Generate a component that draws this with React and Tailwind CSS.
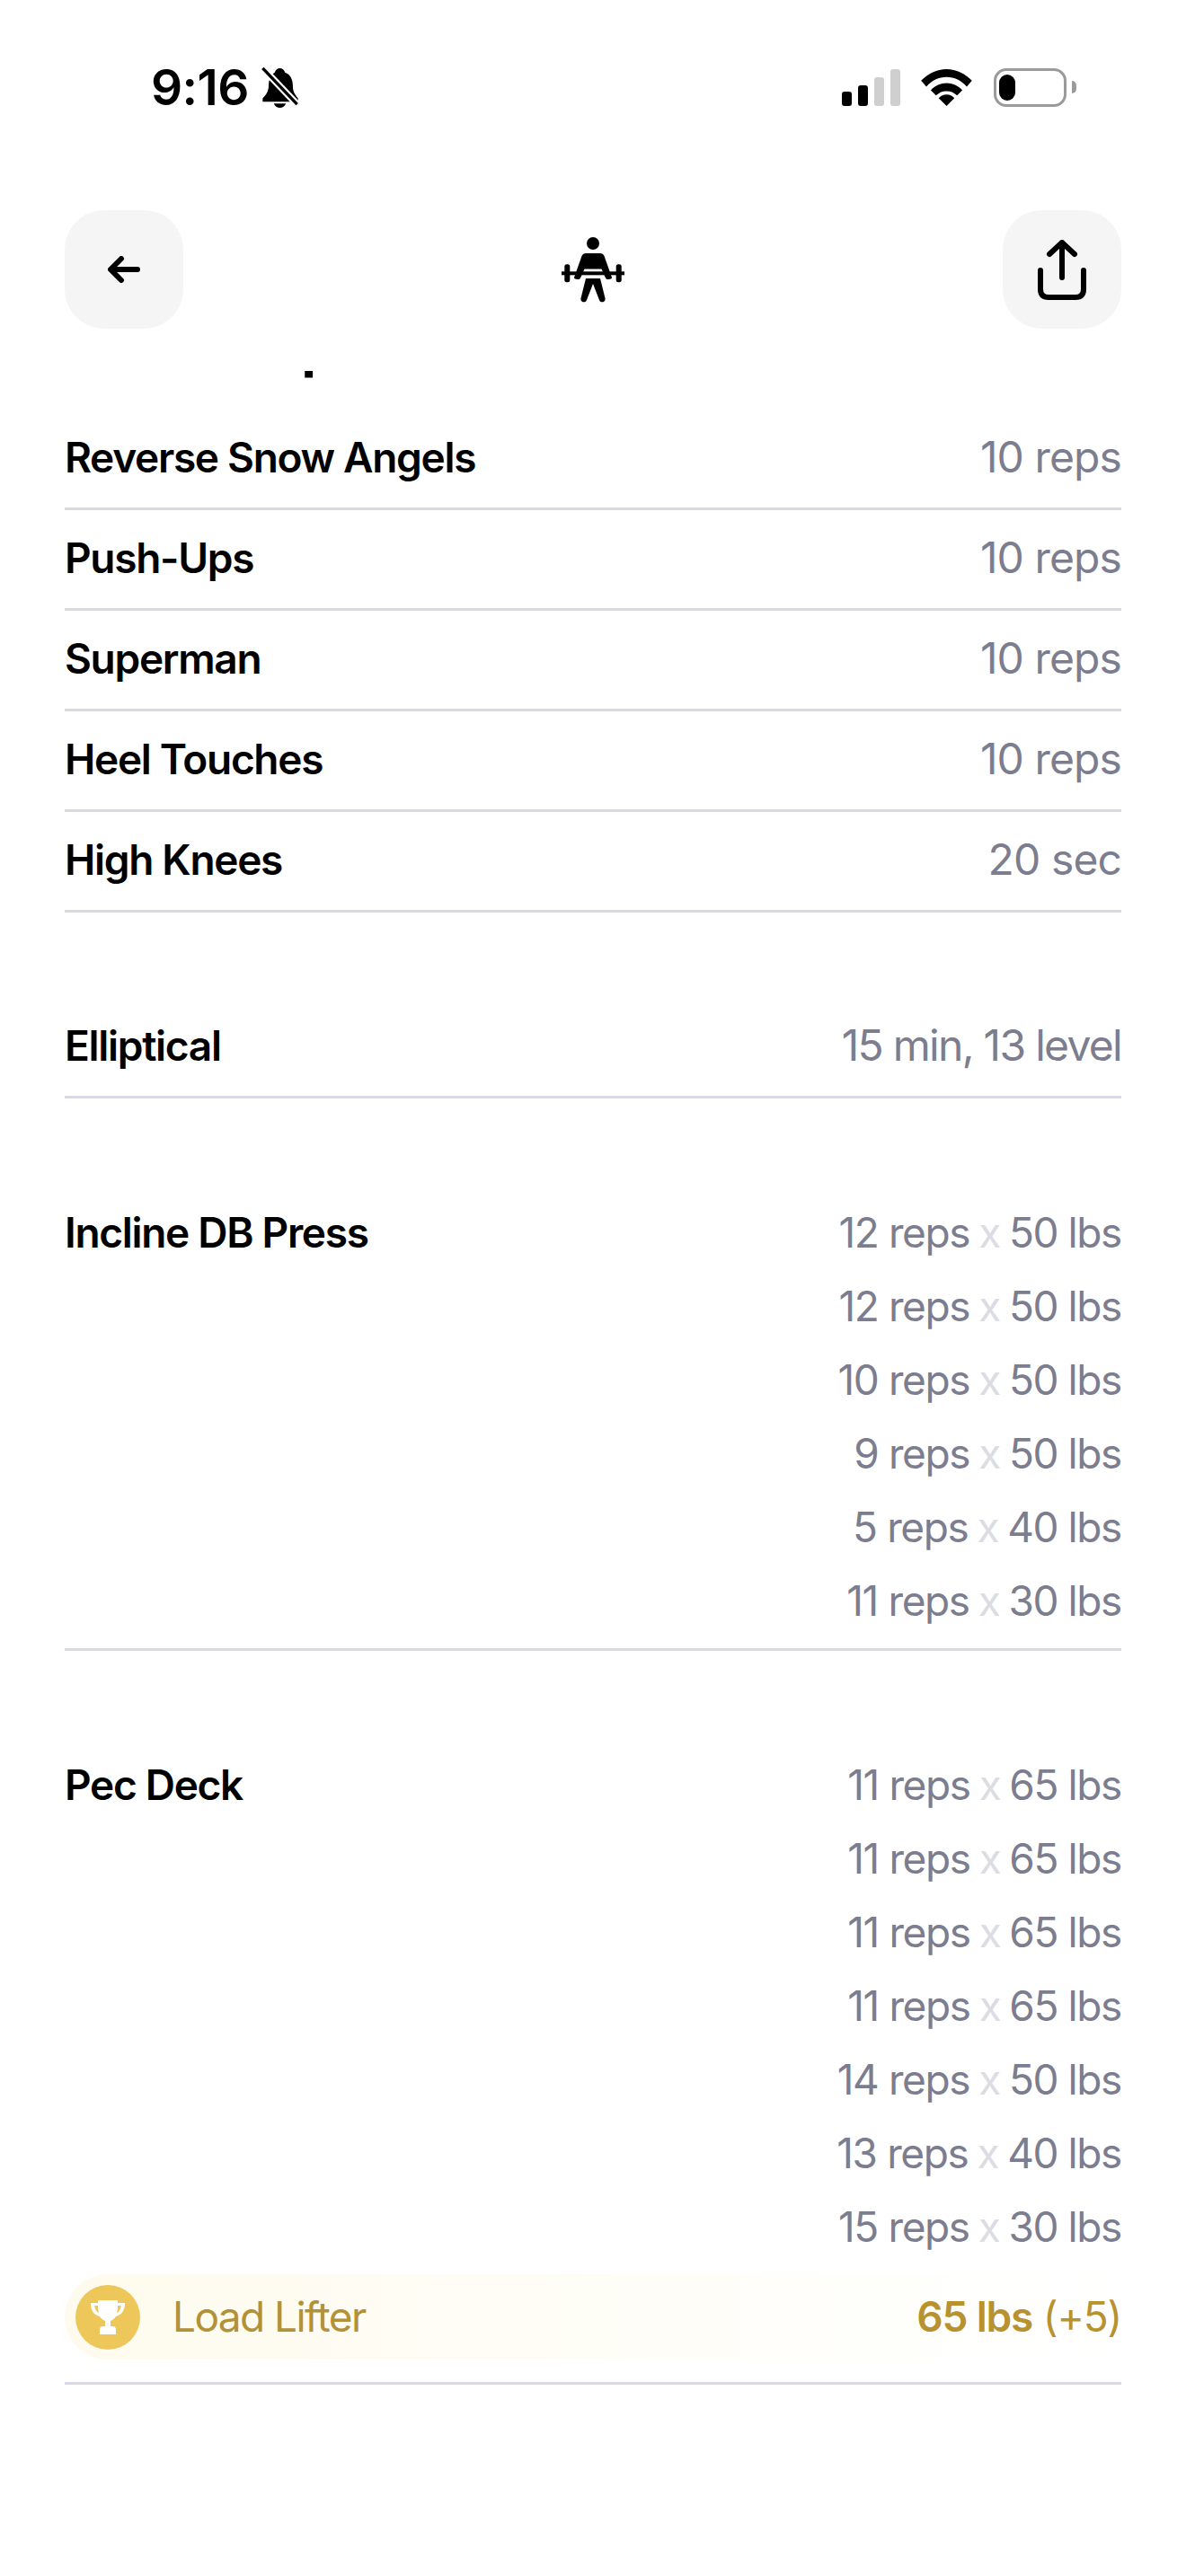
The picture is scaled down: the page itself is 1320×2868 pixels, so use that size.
const sans = "font-['Inter','Liberation_Sans',sans-serif]";

function SetLine({ reps, lbs }) {
  return (
    <div className="flex h-[82px] items-center justify-end text-[46px] tracking-[-1.4px] text-[#7c7d8e]">
      {reps} reps<span className="mx-[10px] text-[#dcdce4]">x</span>{lbs} lbs
    </div>
  );
}

function SimpleRow({ name, value, tight }) {
  return (
    <div className="flex h-[112px] items-center justify-between border-b-[3px] border-[#d9d9e6] pb-[3px]">
      <span className="text-[46px] font-semibold tracking-[-1.3px] text-black">{name}</span>
      <span className={`text-[48px] text-[#7c7d8e] ${tight ? "tracking-[-1.7px]" : "tracking-[-0.9px]"}`}>{value}</span>
    </div>
  );
}

function SetsBlock({ name, sets, className, children }) {
  return (
    <div className={`${className} border-b-[3px] border-[#d9d9e6] pb-[12px]`}>
      <div className="flex justify-between">
        <span className="flex h-[82px] items-center text-[46px] font-semibold tracking-[-1.3px] text-black">{name}</span>
        <div>
          {sets.map((s, i) => (
            <SetLine key={i} reps={s[0]} lbs={s[1]} />
          ))}
        </div>
      </div>
      {children}
    </div>
  );
}

export default function App() {
  return (
    <div className={`${sans} h-[2868px] w-[1320px] overflow-hidden bg-white`}>
      {/* status bar */}
      <div className="flex h-[234px] items-start justify-between pl-[168px] pr-[122px] pt-[72px]">
        <div className="flex h-[50px] items-center gap-[13px]">
          <span className="text-[55px] font-semibold leading-[50px] tracking-[-0.6px] text-black">9:16</span>
          <svg width="43" height="46" viewBox="0 0 44 48" fill="black">
            <path d="M22 2c3 0 5 2 6 5 6 2 9 8 9 15 0 7 2 10 6 15v4H2v-4c4-4 7-8 7-15 0-7 3-13 7-15 1-3 3-5 6-5z" />
            <path d="M15 43h14c-1 3-4 5-7 5s-6-2-7-5z" />
            <path d="M3 3l39 41" stroke="white" strokeWidth="8" />
            <path d="M2 2l40 42" stroke="black" strokeWidth="3.5" />
          </svg>
        </div>
        <div className="flex h-[50px] items-center">
          <div className="flex items-end gap-[7px]">
            <div className="h-[16px] w-[11px] rounded-[3px] bg-black" />
            <div className="h-[23px] w-[11px] rounded-[3px] bg-black" />
            <div className="h-[32px] w-[11px] rounded-[3px] bg-[#cfcfcf]" />
            <div className="h-[41px] w-[11px] rounded-[3px] bg-[#cfcfcf]" />
          </div>
          <svg className="ml-[23px]" width="57" height="41" viewBox="0 0 58 42" fill="black">
            <path d="M0 13C8 5 18 0 29 0s21 5 29 13l-6 7C46 13 38 9 29 9S12 13 6 20z" />
            <path d="M11 24c5-5 11-8 18-8s13 3 18 8l-6 6c-3-3-7-5-12-5s-9 2-12 5z" />
            <path d="M20 33c2-2 5-4 9-4s7 2 9 4l-9 9z" />
          </svg>
          <div className="ml-[24px] flex items-center gap-[6px]">
            <div className="flex h-[43px] w-[81px] items-center rounded-[14px] border-[3px] border-[#9a9a9a] pl-[3px]">
              <div className="h-[29px] w-[18px] rounded-[9px] bg-black" />
            </div>
            <div className="h-[14px] w-[5px] rounded-r-[5px] bg-[#9a9a9a]" />
          </div>
        </div>
      </div>

      {/* header */}
      <div className="flex h-[132px] items-center justify-between px-[72px]">
        <button className="flex h-[132px] w-[132px] items-center justify-center rounded-[44px] bg-[#f5f5f6]">
          <svg width="36" height="30" viewBox="0 0 36 30" fill="none" stroke="black" strokeWidth="6" strokeLinecap="round" strokeLinejoin="round">
            <path d="M33 15H4M15 3 3 15l12 12" />
          </svg>
        </button>
        <svg width="70" height="74" viewBox="0 0 70 74" fill="black">
          <circle cx="35" cy="8" r="7" />
          <path d="M27 19H43C45 19 46.5 20 47.5 22L56 46C56.5 48 50 49 49 46.5L44.5 36.5H25.5L21 46.5C20 49 13.5 48 14 46L22.5 22C23.5 20 25 19 27 19Z" />
          <rect x="0" y="39.3" width="70" height="4" />
          <rect x="3.3" y="31.3" width="6" height="20" rx="2.5" />
          <rect x="60.7" y="31.3" width="6" height="20" rx="2.5" />
          <path d="M27 47H43L48.5 69C49.5 73.5 43 75 42 71L35 53L28 71C27 75 20.5 73.5 21.5 69Z" />
        </svg>
        <button className="flex h-[132px] w-[132px] items-center justify-center rounded-[44px] bg-[#f5f5f6]">
          <svg width="54" height="67" viewBox="0 0 54 67" fill="none" stroke="black" strokeWidth="6" strokeLinecap="round" strokeLinejoin="round">
            <path d="M27 42V3M13 16 27 3l14 13" />
            <path d="M3 34v21c0 6 3 9 9 9h30c6 0 9-3 9-9V34" />
          </svg>
        </button>
      </div>

      {/* list, scrolled so that only the bottom of the section title shows */}
      <div className="mt-[47px] h-[2455px] overflow-hidden px-[72px]">
        <div className="-mt-[74px] mb-[33px] h-[84px] text-[70px] font-semibold leading-[84px] tracking-[-1px] text-black">Warm Up</div>
        <SimpleRow name="Reverse Snow Angels" value="10 reps" />
        <SimpleRow name="Push-Ups" value="10 reps" />
        <SimpleRow name="Superman" value="10 reps" />
        <SimpleRow name="Heel Touches" value="10 reps" />
        <SimpleRow name="High Knees" value="20 sec" />

        <div className="mt-[95px]">
          <SimpleRow name="Elliptical" value="15 min, 13 level" tight />
        </div>

        <SetsBlock
          className="mt-[108px]"
          name="Incline DB Press"
          sets={[[12, 50], [12, 50], [10, 50], [9, 50], [5, 40], [11, 30]]}
        />

        <SetsBlock
          className="mt-[108px]"
          name="Pec Deck"
          sets={[[11, 65], [11, 65], [11, 65], [11, 65], [14, 50], [13, 40], [15, 30]]}
        >
          <div className="mb-[13px] mt-[12px] flex h-[95px] items-center justify-between rounded-l-[48px] bg-gradient-to-r from-[#fefbee] to-white pl-[12px]">
            <div className="flex items-center gap-[36px]">
              <div className="flex h-[72px] w-[72px] items-center justify-center rounded-full bg-[#eec75a]">
                <svg width="40" height="40" viewBox="0 0 40 40" fill="white">
                  <path d="M9 1h22v3h8c0 8-3 13-10 15-2 3-4 4-6 5v6h3c2 0 3 2 3 4v5H11v-5c0-2 1-4 3-4h3v-6c-2-1-4-2-6-5C4 17 1 12 1 4h8zM5 7c1 4 2 7 5 8-1-2-1-5-1-8zm30 0h-4c0 3 0 6-1 8 3-1 4-4 5-8z" />
                </svg>
              </div>
              <span className="text-[46px] tracking-[-1.6px] text-[#b39137]">Load Lifter</span>
            </div>
            <span className="text-[46px] tracking-[-1.2px] text-[#b8922f]">
              <span className="font-semibold">65 lbs</span> (+5)
            </span>
          </div>
        </SetsBlock>
      </div>
    </div>
  );
}
